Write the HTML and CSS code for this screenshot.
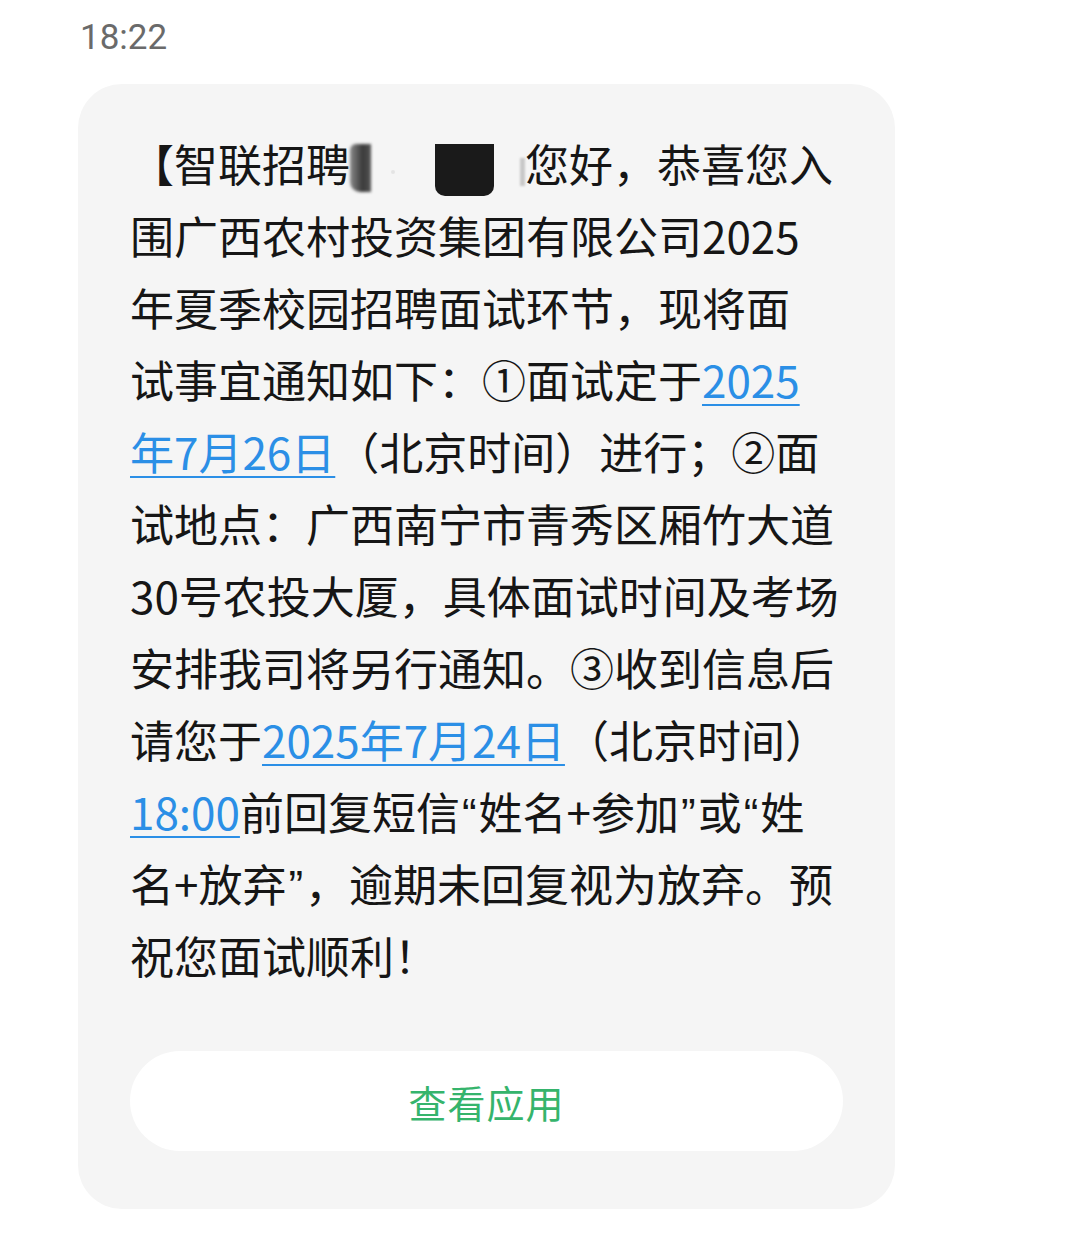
FILE: index.html
```html
<!DOCTYPE html>
<html lang="zh-CN">
<head>
<meta charset="utf-8">
<link rel="stylesheet" href="styles.css">
</head>
<body>
<div class="page">
  <div class="time">18:22</div>
  <div class="bubble">
    <p class="msg">【智联招聘<span class="redact"><span class="blur"></span><span class="dot"></span><span class="black"></span><span class="ghost"></span></span>您好，恭喜您入<br>围广西农村投资集团有限公司2025<br>年夏季校园招聘面试环节，现将面<br>试事宜通知如下：①面试定于<a class="link">2025</a><br><a class="link">年7月26日</a>（北京时间）进行；②面<br>试地点：广西南宁市青秀区厢竹大道<br>30号农投大厦，具体面试时间及考场<br>安排我司将另行通知。③收到信息后<br>请您于<a class="link">2025年7月24日</a>（北京时间）<br><a class="link">18:00</a>前回复短信<span class="q">“</span>姓名+参加<span class="q">”</span>或<span class="q">“</span>姓<br>名+放弃<span class="q">”</span>，逾期未回复视为放弃。预<br>祝您面试顺利！</p>
    <div class="action">查看应用</div>
  </div>
</div>
</body>
</html>
```
FILE: styles.css
```css
html, body {
  margin: 0;
  padding: 0;
  background: #ffffff;
}
.page {
  width: 1080px;
  height: 1244px;
  box-sizing: border-box;
  padding: 16px 0 0 78px;
  font-family: "Noto Sans CJK SC", "Noto Sans", sans-serif;
}
.time {
  font-family: Roboto, "Noto Sans", sans-serif;
  font-size: 35px;
  line-height: 44px;
  color: #6a6a6a;
  padding-left: 2px;
}
.bubble {
  margin-top: 24px;
  width: 817px;
  box-sizing: border-box;
  background: #f5f5f5;
  border-radius: 44px;
  padding: 43px 52px 58px 52px;
}
.msg {
  margin: 0;
  font-size: 44px;
  line-height: 72px;
  color: #161616;
  white-space: nowrap;
}
.q {
  font-family: "Liberation Sans", sans-serif;
  line-height: 0;
  padding: 0 2px;
}
.link {
  color: #2b8fe6;
  text-decoration: underline;
  text-decoration-thickness: 2px;
  text-underline-offset: 6px;
}
.redact {
  display: inline-flex;
  align-items: flex-start;
  width: 175px;
  height: 52px;
  line-height: 0;
  vertical-align: -10px;
}
.blur {
  width: 22px;
  height: 48px;
  background: linear-gradient(90deg, #8a8a8a, #3a3a3a 60%, #555 100%);
  filter: blur(1.5px);
  border-radius: 6px 0 0 10px;
}
.dot {
  width: 4px;
  height: 4px;
  margin: 26px 0 0 20px;
  background: #e4e4e4;
  border-radius: 50%;
}
.black {
  width: 61px;
  height: 52px;
  margin-left: 40px;
  background: #1a1a1a;
  border-radius: 0 0 10px 10px;
}
.ghost {
  width: 5px;
  height: 28px;
  margin: 14px 0 0 26px;
  background: #c8c8c8;
  filter: blur(1px);
}
.action {
  margin-top: 60px;
  height: 100px;
  border-radius: 50px;
  background: #ffffff;
  display: flex;
  align-items: center;
  justify-content: center;
  color: #35b46c;
  font-size: 38px;
  letter-spacing: 1px;
}
```
